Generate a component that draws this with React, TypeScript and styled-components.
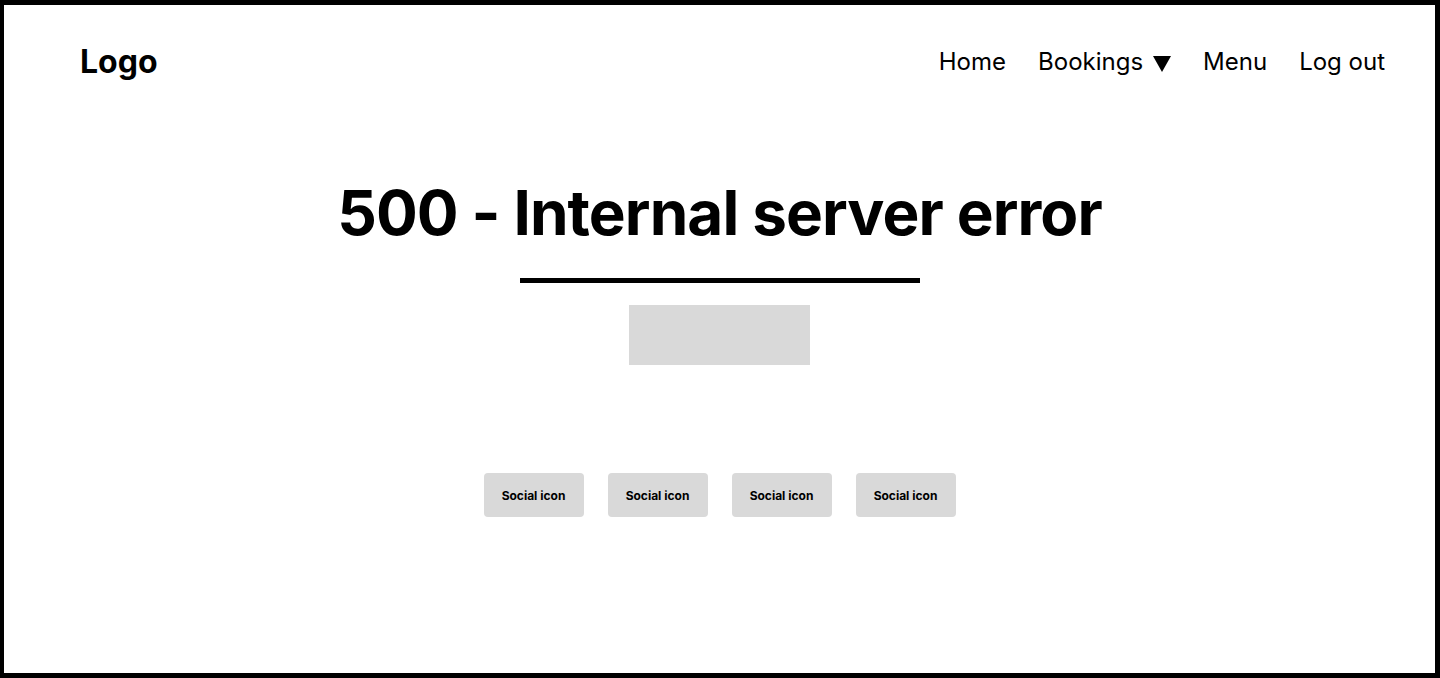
import styled, {createGlobalStyle} from "styled-components";

const GlobalStyle = createGlobalStyle`
  * {
    box-sizing: border-box;
  }
  body {
    margin: 0;
    background: #ffffff;
    font-family: Inter, "Liberation Sans", sans-serif;
    color: #000000;
  }
`;

const Frame = styled.div`
  width: 1440px;
  height: 678px;
  border: 5px solid #000000;
  border-left-width: 4px;
  display: flex;
  flex-direction: column;
`;

const Header = styled.header`
  display: flex;
  align-items: center;
  justify-content: space-between;
  height: 113px;
  padding: 0 50px 0 76px;
`;

const Logo = styled.div`
  font-size: 32px;
  font-weight: 700;
`;

const Nav = styled.nav`
  display: flex;
  align-items: center;
  gap: 32px;
`;

const NavLink = styled.a`
  font-size: 24px;
  font-weight: 400;
  color: #000000;
  text-decoration: none;
  display: flex;
  align-items: center;
  gap: 10px;
`;

const Caret = styled.span`
  width: 0;
  height: 0;
  border-left: 9px solid transparent;
  border-right: 9px solid transparent;
  border-top: 16px solid #000000;
  margin-top: 4px;
`;

const Main = styled.main`
  display: flex;
  flex-direction: column;
  align-items: center;
`;

const Heading = styled.h1`
  margin: 58px 0 0;
  font-size: 62px;
  font-weight: 700;
  letter-spacing: -0.9px;
  line-height: 74px;
`;

const Rule = styled.div`
  width: 400px;
  height: 5px;
  background: #000000;
  margin-top: 28px;
`;

const Placeholder = styled.div`
  width: 181px;
  height: 60px;
  background: #d9d9d9;
  margin-top: 22px;
`;

const Socials = styled.div`
  display: flex;
  gap: 24px;
  margin-top: 108px;
`;

const SocialButton = styled.button`
  width: 100px;
  height: 44px;
  border: none;
  border-radius: 4px;
  background: #d9d9d9;
  font-family: Inter, "Liberation Sans", sans-serif;
  font-size: 12px;
  font-weight: 700;
  color: #000000;
  padding: 0;
`;

const navItems = ["Home", "Bookings", "Menu", "Log out"];

export default function App() {
  return (
    <>
      <GlobalStyle />
      <Frame>
        <Header>
          <Logo>Logo</Logo>
          <Nav>
            {navItems.map((item) => (
              <NavLink key={item} href="#">
                {item}
                {item === "Bookings" && <Caret />}
              </NavLink>
            ))}
          </Nav>
        </Header>
        <Main>
          <Heading>500 - Internal server error</Heading>
          <Rule />
          <Placeholder />
          <Socials>
            {[0, 1, 2, 3].map((i) => (
              <SocialButton key={i}>Social icon</SocialButton>
            ))}
          </Socials>
        </Main>
      </Frame>
    </>
  );
}
